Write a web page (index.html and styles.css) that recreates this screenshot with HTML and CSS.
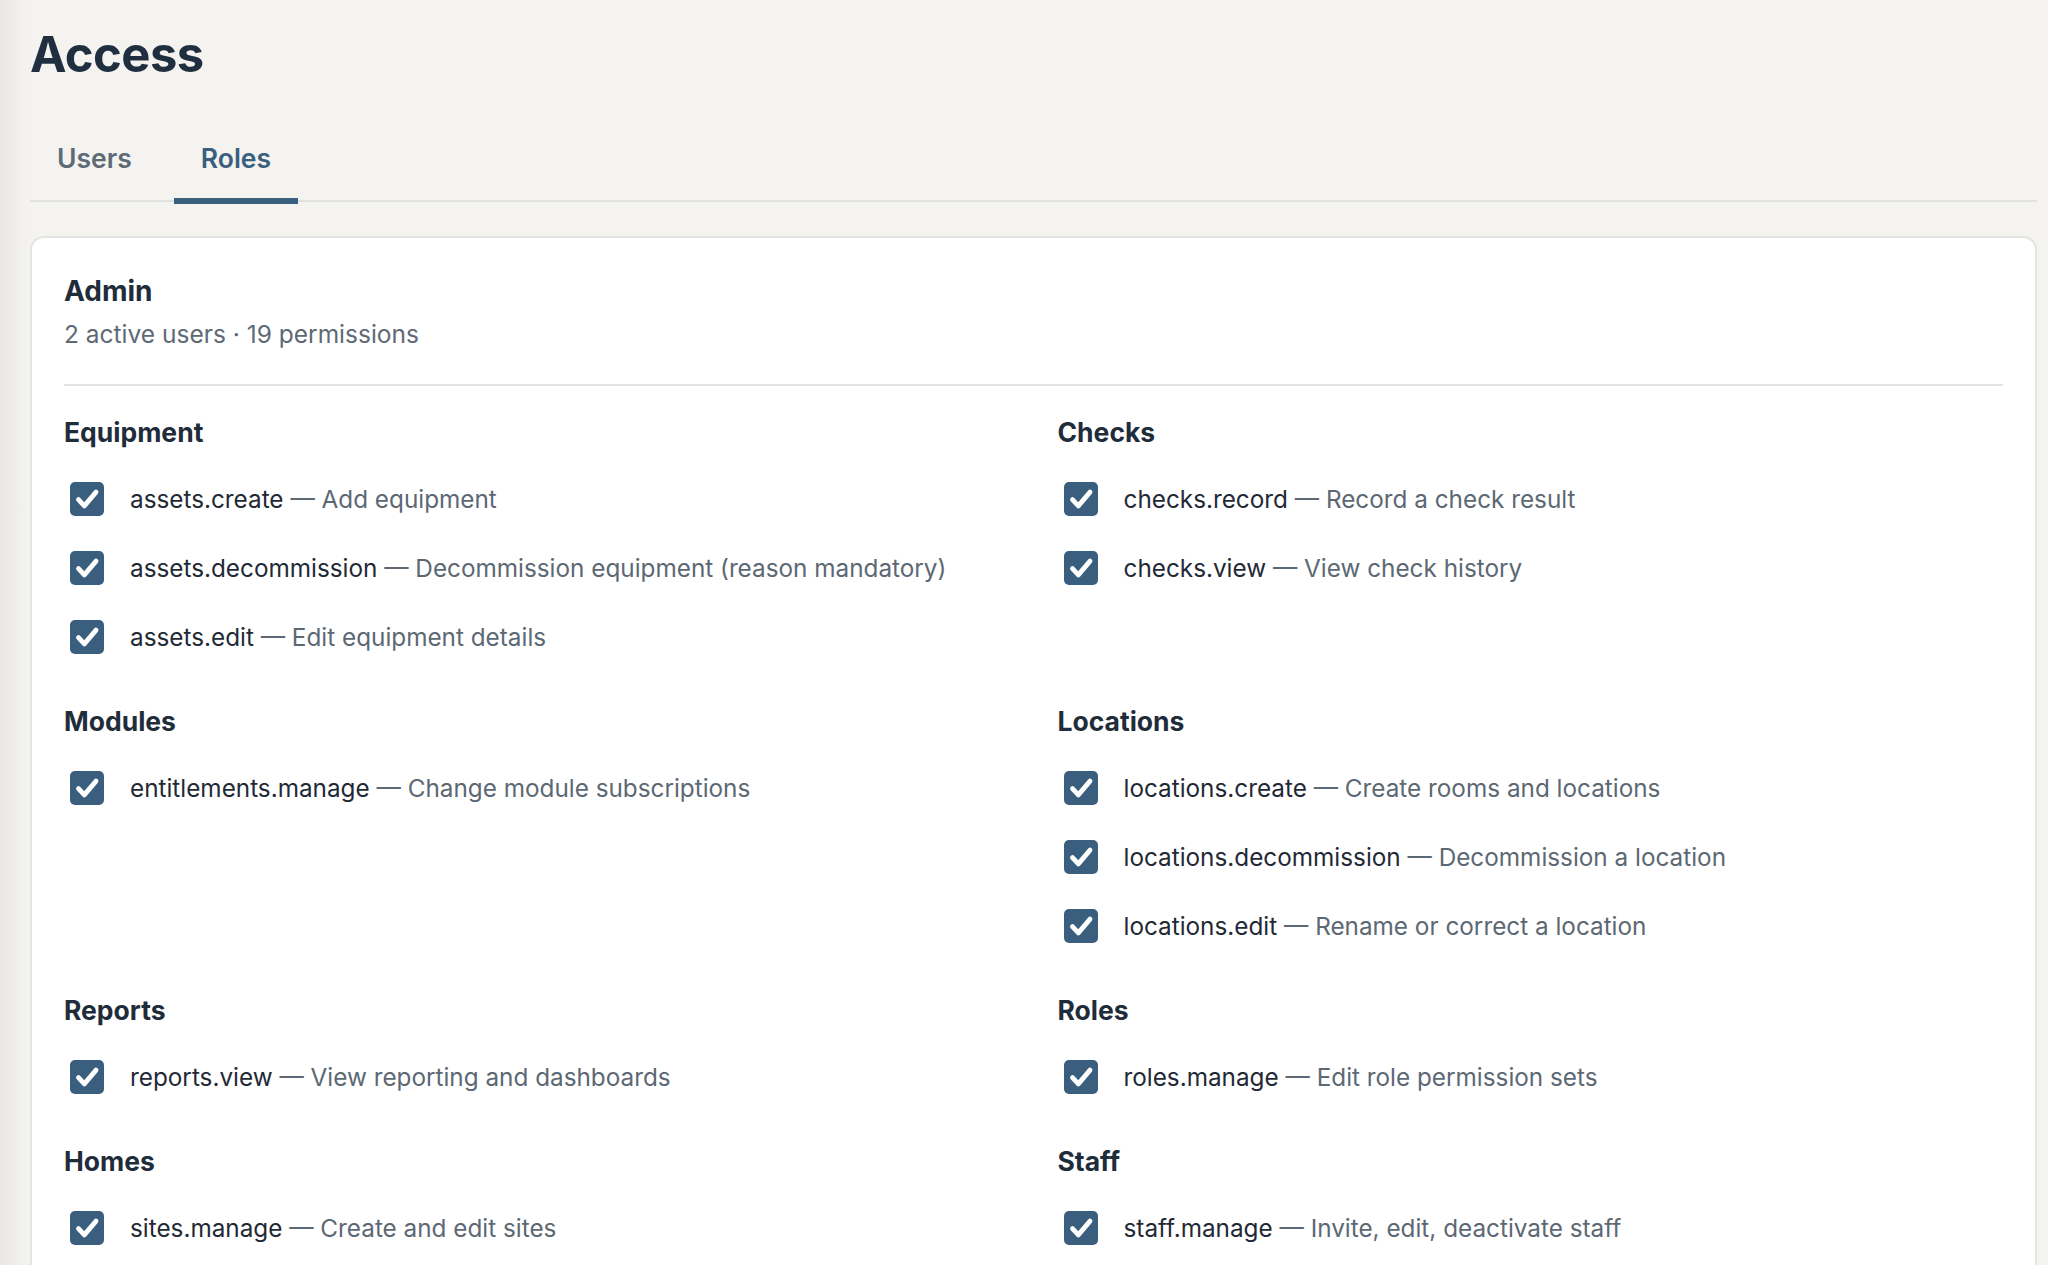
FILE: index.html
```html
<!DOCTYPE html>
<html lang="en">
<head>
    <meta charset="UTF-8">
    <meta name="viewport" content="width=device-width, initial-scale=1.0">
    <title>Access</title>
    <link rel="stylesheet" href="styles.css">
</head>
<body>
    <main class="page">
        <h1 class="page-title">Access</h1>

        <nav class="tabs">
            <a class="tab" href="#">Users</a>
            <a class="tab active" href="#">Roles</a>
        </nav>

        <section class="role-card">
            <header class="role-head">
                <h2 class="role-name">Admin</h2>
                <p class="role-meta">2 active users · 19 permissions</p>
            </header>

            <div class="perm-grid">
                <div class="perm-group">
                    <h3>Equipment</h3>
                    <ul class="perm-list">
                        <li class="perm"><span class="check"><svg viewBox="0 0 32 32"><path d="M8 16.5 L13.5 22.5 L24.5 9.5"/></svg></span><span class="perm-text"><span class="perm-key">assets.create</span> — Add equipment</span></li>
                        <li class="perm"><span class="check"><svg viewBox="0 0 32 32"><path d="M8 16.5 L13.5 22.5 L24.5 9.5"/></svg></span><span class="perm-text"><span class="perm-key">assets.decommission</span> — Decommission equipment (reason mandatory)</span></li>
                        <li class="perm"><span class="check"><svg viewBox="0 0 32 32"><path d="M8 16.5 L13.5 22.5 L24.5 9.5"/></svg></span><span class="perm-text"><span class="perm-key">assets.edit</span> — Edit equipment details</span></li>
                    </ul>
                </div>

                <div class="perm-group">
                    <h3>Checks</h3>
                    <ul class="perm-list">
                        <li class="perm"><span class="check"><svg viewBox="0 0 32 32"><path d="M8 16.5 L13.5 22.5 L24.5 9.5"/></svg></span><span class="perm-text"><span class="perm-key">checks.record</span> — Record a check result</span></li>
                        <li class="perm"><span class="check"><svg viewBox="0 0 32 32"><path d="M8 16.5 L13.5 22.5 L24.5 9.5"/></svg></span><span class="perm-text"><span class="perm-key">checks.view</span> — View check history</span></li>
                    </ul>
                </div>

                <div class="perm-group">
                    <h3>Modules</h3>
                    <ul class="perm-list">
                        <li class="perm"><span class="check"><svg viewBox="0 0 32 32"><path d="M8 16.5 L13.5 22.5 L24.5 9.5"/></svg></span><span class="perm-text"><span class="perm-key">entitlements.manage</span> — Change module subscriptions</span></li>
                    </ul>
                </div>

                <div class="perm-group">
                    <h3>Locations</h3>
                    <ul class="perm-list">
                        <li class="perm"><span class="check"><svg viewBox="0 0 32 32"><path d="M8 16.5 L13.5 22.5 L24.5 9.5"/></svg></span><span class="perm-text"><span class="perm-key">locations.create</span> — Create rooms and locations</span></li>
                        <li class="perm"><span class="check"><svg viewBox="0 0 32 32"><path d="M8 16.5 L13.5 22.5 L24.5 9.5"/></svg></span><span class="perm-text"><span class="perm-key">locations.decommission</span> — Decommission a location</span></li>
                        <li class="perm"><span class="check"><svg viewBox="0 0 32 32"><path d="M8 16.5 L13.5 22.5 L24.5 9.5"/></svg></span><span class="perm-text"><span class="perm-key">locations.edit</span> — Rename or correct a location</span></li>
                    </ul>
                </div>

                <div class="perm-group">
                    <h3>Reports</h3>
                    <ul class="perm-list">
                        <li class="perm"><span class="check"><svg viewBox="0 0 32 32"><path d="M8 16.5 L13.5 22.5 L24.5 9.5"/></svg></span><span class="perm-text"><span class="perm-key">reports.view</span> — View reporting and dashboards</span></li>
                    </ul>
                </div>

                <div class="perm-group">
                    <h3>Roles</h3>
                    <ul class="perm-list">
                        <li class="perm"><span class="check"><svg viewBox="0 0 32 32"><path d="M8 16.5 L13.5 22.5 L24.5 9.5"/></svg></span><span class="perm-text"><span class="perm-key">roles.manage</span> — Edit role permission sets</span></li>
                    </ul>
                </div>

                <div class="perm-group">
                    <h3>Homes</h3>
                    <ul class="perm-list">
                        <li class="perm"><span class="check"><svg viewBox="0 0 32 32"><path d="M8 16.5 L13.5 22.5 L24.5 9.5"/></svg></span><span class="perm-text"><span class="perm-key">sites.manage</span> — Create and edit sites</span></li>
                    </ul>
                </div>

                <div class="perm-group">
                    <h3>Staff</h3>
                    <ul class="perm-list">
                        <li class="perm"><span class="check"><svg viewBox="0 0 32 32"><path d="M8 16.5 L13.5 22.5 L24.5 9.5"/></svg></span><span class="perm-text"><span class="perm-key">staff.manage</span> — Invite, edit, deactivate staff</span></li>
                    </ul>
                </div>
            </div>
        </section>
    </main>
</body>
</html>
```

FILE: styles.css
```css
* {
    margin: 0;
    padding: 0;
    box-sizing: border-box;
}

body {
    font-family: Inter, "Liberation Sans", sans-serif;
    background: linear-gradient(to right, #e9e8e4 0, #f4f3f0 28px) #f4f3f0;
    color: #1f2d3b;
    overflow: hidden;
}

.page {
    padding: 25px 11px 0 30px;
}

.page-title {
    font-size: 49px;
    line-height: 60px;
    font-weight: 700;
    letter-spacing: -0.6px;
    color: #1f2f40;
}

/* tabs */
.tabs {
    display: flex;
    gap: 15px;
    margin-top: 36px;
    border-bottom: 2px solid #dfe2e1;
}

.tab {
    position: relative;
    padding: 21px 27px 26px;
    font-size: 26.5px;
    line-height: 32px;
    font-weight: 600;
    color: #5d6b77;
    text-decoration: none;
}

.tab.active {
    color: #3a5f7e;
}

.tab.active::after {
    content: "";
    position: absolute;
    left: 0;
    right: 0;
    bottom: -4px;
    height: 6px;
    background: #3a5f7e;
}

/* role card */
.role-card {
    margin-top: 34px;
    background: #fff;
    border: 2px solid #e2e5e4;
    border-radius: 14px;
    padding: 35px 32px 60px;
}

.role-head {
    padding-bottom: 34px;
    border-bottom: 2px solid #e0e3e3;
}

.role-name {
    font-size: 28px;
    line-height: 36px;
    font-weight: 650;
    color: #1f2d3b;
}

.role-meta {
    margin-top: 9px;
    font-size: 24.5px;
    line-height: 32px;
    color: #5e6a75;
}

.perm-grid {
    display: grid;
    grid-template-columns: 1fr 1fr;
    column-gap: 48px;
    row-gap: 51px;
    margin-top: 30px;
}

.perm-group h3 {
    font-size: 26.5px;
    line-height: 32px;
    font-weight: 700;
    color: #1f2d3b;
}

.perm-list {
    list-style: none;
    display: flex;
    flex-direction: column;
    gap: 35px;
    margin-top: 34px;
}

.perm {
    display: flex;
    align-items: center;
    gap: 26px;
    height: 34px;
    padding-left: 6px;
    font-size: 24.3px;
    color: #5c6873;
}

.check {
    flex: none;
    width: 34px;
    height: 34px;
    border-radius: 5px;
    background: #3a5f7e;
    display: flex;
}

.check svg {
    width: 100%;
    height: 100%;
    fill: none;
    stroke: #fff;
    stroke-width: 4.5;
    stroke-linecap: round;
    stroke-linejoin: round;
}

.perm-key {
    color: #1f2a36;
}
```
